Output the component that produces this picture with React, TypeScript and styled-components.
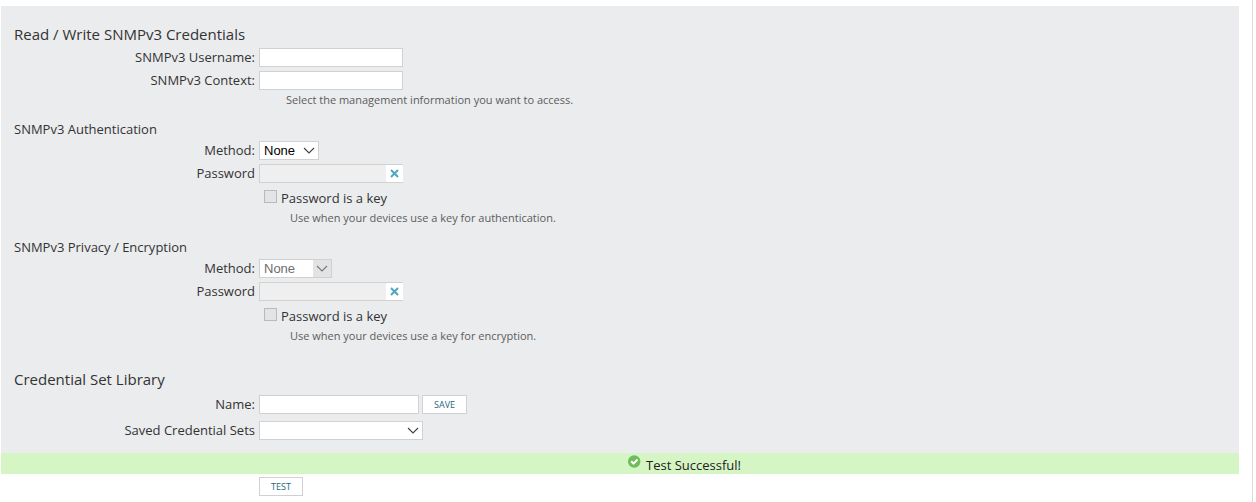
import React, { useState } from "react";
import styled, { createGlobalStyle } from "styled-components";

const GlobalStyle = createGlobalStyle`
  *, *::before, *::after { box-sizing: border-box; }
  body {
    margin: 0;
    background: #ffffff;
    color: #333333;
    font-family: "Open Sans", sans-serif;
    font-size: 13px;
    line-height: 18px;
  }
  input, select, button { font-family: inherit; margin: 0; }
`;

const Page = styled.main`
  min-height: 100vh;
  margin-right: 3px;
  padding: 6px 13px 0 1px;
  border-right: 1px solid #dcdcdc;
`;

const Panel = styled.section`
  padding: 18px 13px 10px;
  background: #ebecee;
`;

const Group = styled.section<{ $gap?: number }>`
  margin-top: ${({ $gap = 0 }) => $gap}px;
`;

const Title = styled.h2`
  margin: 0;
  padding-bottom: 2px;
  font-size: 15px;
  font-weight: 400;
  line-height: 20px;
`;

const Subtitle = styled.h3`
  margin: 0;
  font-size: 13px;
  font-weight: 400;
  line-height: 19px;
`;

const Row = styled.div<{ $tall?: boolean }>`
  display: grid;
  grid-template-columns: 241px 1fr;
  column-gap: 4px;
  align-items: center;
  min-height: ${({ $tall }) => ($tall ? 26 : 23)}px;
`;

const Label = styled.label`
  padding-bottom: 2px;
  text-align: right;
`;

const LibraryLabel = styled.label`
  text-align: right;
`;

const Controls = styled.div`
  grid-column: 2;
  display: flex;
  align-items: center;
  gap: 3px;
`;

const TextInput = styled.input<{ $width: number }>`
  width: ${({ $width }) => $width}px;
  height: 19px;
  padding: 0 4px;
  border: 1px solid #d0d1d3;
  border-radius: 0;
  background: #ffffff;
  font-size: 13px;
`;

const PasswordBox = styled.div`
  display: flex;
  width: 144px;
  height: 19px;
  border: 1px solid #d0d1d3;
  border-right: 0;
  background: #efefef;
`;

const PasswordInput = styled.input`
  flex: 1;
  min-width: 0;
  padding: 0 4px;
  border: 0;
  background: transparent;
`;

const ClearButton = styled.button`
  display: flex;
  align-items: center;
  justify-content: center;
  width: 17px;
  padding: 0;
  border: 0;
  background: #ffffff;
`;

const SelectBox = styled.div<{ $width: number }>`
  position: relative;
  width: ${({ $width }) => $width}px;
  height: 19px;
`;

const Select = styled.select`
  appearance: none;
  width: 100%;
  height: 100%;
  padding: 0 20px 0 4px;
  border: 1px solid #d0d1d3;
  border-radius: 0;
  background: #ffffff;
  color: #000000;
  font-family: "Liberation Sans", sans-serif;
  font-size: 13px;

  &:disabled { color: #6d6d6d; opacity: 1; }
`;

const ArrowCell = styled.span<{ $disabled?: boolean }>`
  position: absolute;
  top: 1px;
  right: 1px;
  bottom: 1px;
  display: flex;
  align-items: center;
  justify-content: center;
  width: 18px;
  background: ${({ $disabled }) => ($disabled ? "#e3e3e3" : "transparent")};
  color: ${({ $disabled }) => ($disabled ? "#777777" : "#404040")};
  pointer-events: none;
`;

const CheckLabel = styled.label`
  grid-column: 2;
  display: flex;
  align-items: flex-start;
  gap: 4px;
  height: 25px;
  padding: 5px 0 0 5px;
`;

const Checkbox = styled.input`
  appearance: none;
  width: 13px;
  height: 13px;
  border: 1px solid #b9babc;
  background: #e3e4e5;
`;

const CheckText = styled.span`
  line-height: 16px;
`;

const Hint = styled.p<{ $indent: number }>`
  margin: 0;
  padding-left: ${({ $indent }) => 245 + $indent}px;
  color: #5c5c5c;
  font-size: 11px;
  line-height: 16px;
`;

const Button = styled.button`
  height: 19px;
  padding: 0 11px;
  border: 1px solid #d0d1d3;
  background: #ffffff;
  color: #22687e;
  font-size: 9px;
  line-height: 17px;
  text-transform: uppercase;
`;

const Status = styled.div`
  display: flex;
  gap: 5px;
  height: 21px;
  padding: 2px 0 0 calc(50% + 8px);
  background: #d6f5c4;
  color: #222222;

  span { padding-top: 1px; }
`;

const Footer = styled.div`
  padding: 1px 13px 0;
`;

const Arrow = () => (
  <svg width="12" height="7" viewBox="0 0 12 7" fill="none" stroke="currentColor" strokeWidth="1.1" aria-hidden="true">
    <path d="M1 1 L6 6 L11 1" />
  </svg>
);

const Cross = () => (
  <svg width="9" height="9" viewBox="0 0 9 9" fill="none" stroke="#4fa6bd" strokeWidth="2" aria-hidden="true">
    <path d="M1 1 L8 8 M8 1 L1 8" />
  </svg>
);

const Tick = () => (
  <svg width="13" height="13" viewBox="0 0 13 13" aria-hidden="true">
    <circle cx="6.2" cy="6.5" r="6.2" fill="#70bb5e" />
    <path d="M3.2 6.2 L5.5 8.6 L9.5 4.5" fill="none" stroke="#ffffff" strokeWidth="2" />
  </svg>
);

interface SecurityProps {
  id: string;
  title: string;
  purpose: string;
  gap: number;
  disabled?: boolean;
}

function SecurityGroup({ id, title, purpose, gap, disabled }: SecurityProps) {
  return (
    <Group $gap={gap}>
      <Subtitle>{title}</Subtitle>
      <Row>
        <Label htmlFor={`${id}-method`}>Method:</Label>
        <SelectBox $width={disabled ? 73 : 60}>
          <Select id={`${id}-method`} disabled={disabled}>
            <option>None</option>
          </Select>
          <ArrowCell $disabled={disabled}><Arrow /></ArrowCell>
        </SelectBox>
      </Row>
      <Row>
        <Label htmlFor={`${id}-password`}>Password</Label>
        <PasswordBox>
          <PasswordInput id={`${id}-password`} type="password" disabled />
          <ClearButton type="button" aria-label="Clear password"><Cross /></ClearButton>
        </PasswordBox>
      </Row>
      <Row>
        <CheckLabel>
          <Checkbox type="checkbox" disabled />
          <CheckText>Password is a key</CheckText>
        </CheckLabel>
      </Row>
      <Hint $indent={31}>Use when your devices use a key for {purpose}.</Hint>
    </Group>
  );
}

export default function App() {
  const [username, setUsername] = useState("");
  const [context, setContext] = useState("");
  const [name, setName] = useState("");

  return (
    <>
      <GlobalStyle />
      <Page>
        <Panel>
          <Group>
            <Title>Read / Write SNMPv3 Credentials</Title>
            <Row>
              <Label htmlFor="username">SNMPv3 Username:</Label>
              <TextInput id="username" $width={144} value={username} onChange={(e) => setUsername(e.target.value)} />
            </Row>
            <Row>
              <Label htmlFor="context">SNMPv3 Context:</Label>
              <TextInput id="context" $width={144} value={context} onChange={(e) => setContext(e.target.value)} />
            </Row>
            <Hint $indent={27}>Select the management information you want to access.</Hint>
          </Group>
          <SecurityGroup id="auth" title="SNMPv3 Authentication" purpose="authentication" gap={12} />
          <SecurityGroup id="privacy" title="SNMPv3 Privacy / Encryption" purpose="encryption" gap={12} disabled />
          <Group $gap={25}>
            <Title>Credential Set Library</Title>
            <Row $tall>
              <LibraryLabel htmlFor="set-name">Name:</LibraryLabel>
              <Controls>
                <TextInput id="set-name" $width={160} value={name} onChange={(e) => setName(e.target.value)} />
                <Button type="button">Save</Button>
              </Controls>
            </Row>
            <Row $tall>
              <LibraryLabel htmlFor="saved-sets">Saved Credential Sets</LibraryLabel>
              <SelectBox $width={164}>
                <Select id="saved-sets"><option /></Select>
                <ArrowCell><Arrow /></ArrowCell>
              </SelectBox>
            </Row>
          </Group>
        </Panel>
        <Status role="status">
          <Tick />
          <span>Test Successful!</span>
        </Status>
        <Footer>
          <Row>
            <Controls><Button type="button">Test</Button></Controls>
          </Row>
        </Footer>
      </Page>
    </>
  );
}
